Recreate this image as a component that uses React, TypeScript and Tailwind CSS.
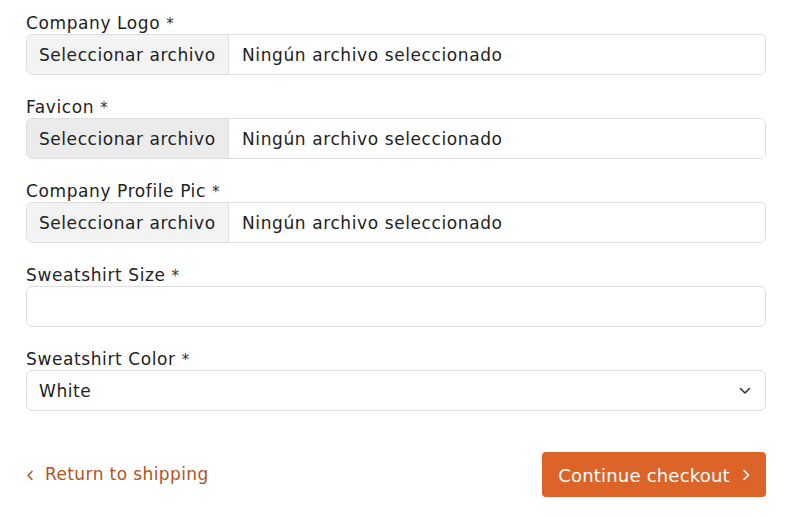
import React from "react";

function FileField({ label, active }: { label: string; active?: boolean }) {
  return (
    <div className="flex flex-col">
      <label className="h-[24px] leading-[24px] pt-[1px] text-[17px] tracking-[0.6px] text-[#222]">
        {label} <span className="text-[#333] text-[15px]">*</span>
      </label>
      <div className="flex h-[41px] border border-[#dedede] rounded-[6px] overflow-hidden">
        <div className={`flex items-center pl-[12px] pt-[2px] w-[202px] border-r border-[#dedede] text-[17px] tracking-[0.55px] text-[#222] ${active ? "bg-[#ebebeb]" : "bg-[#f3f3f3]"}`}>
          Seleccionar archivo
        </div>
        <div className="flex items-center pl-[13px] pt-[2px] text-[17px] tracking-[0.6px] text-[#222] bg-white flex-1">
          Ningún archivo seleccionado
        </div>
      </div>
    </div>
  );
}

export default function App() {
  return (
    <div className="w-[786px] h-[517px] bg-white px-[26px] pt-[10px]" style={{ fontFamily: '"DejaVu Sans", "Liberation Sans", sans-serif' }}>
      <div className="w-[740px] flex flex-col gap-[19px]">
        <FileField label="Company Logo" />
        <FileField label="Favicon" active />
        <FileField label="Company Profile Pic" />
        <div className="flex flex-col">
          <label className="h-[24px] leading-[24px] pt-[1px] text-[17px] tracking-[0.6px] text-[#222]">
            Sweatshirt Size <span className="text-[#333] text-[15px]">*</span>
          </label>
          <div className="h-[41px] border border-[#dedede] rounded-[6px] bg-white" />
        </div>
        <div className="flex flex-col">
          <label className="h-[24px] leading-[24px] pt-[1px] text-[17px] tracking-[0.6px] text-[#222]">
            Sweatshirt Color <span className="text-[#333] text-[15px]">*</span>
          </label>
          <div className="h-[41px] border border-[#dedede] rounded-[6px] bg-white flex items-center justify-between pl-[12px] pr-[14px]">
            <span className="text-[17px] tracking-[0.6px] pt-[2px] text-[#222]">White</span>
            <svg width="12" height="8" viewBox="0 0 12 8" fill="none">
              <path d="M1.5 1.5L6 6L10.5 1.5" stroke="#333" strokeWidth="1.6" strokeLinecap="round" strokeLinejoin="round" />
            </svg>
          </div>
        </div>
      </div>
      <div className="w-[740px] flex items-center justify-between mt-[41px]">
        <a className="flex items-center gap-[11px] text-[#b0531f] text-[17px] tracking-[0.4px] pt-[1px]">
          <svg width="8" height="11" viewBox="0 0 8 11" fill="none">
            <path d="M6 1.5L2 5.5L6 9.5" stroke="#b0531f" strokeWidth="1.5" strokeLinecap="round" strokeLinejoin="round" />
          </svg>
          Return to shipping
        </a>
        <button className="h-[45px] w-[224px] rounded-[4px] bg-[#dc6428] text-white text-[18px] tracking-[0.2px] flex items-center justify-center gap-[12px] pt-[1px]">
          Continue checkout
          <svg width="8" height="12" viewBox="0 0 8 12" fill="none">
            <path d="M2 1.5L6.5 6L2 10.5" stroke="#fff" strokeWidth="1.6" strokeLinecap="round" strokeLinejoin="round" />
          </svg>
        </button>
      </div>
    </div>
  );
}
